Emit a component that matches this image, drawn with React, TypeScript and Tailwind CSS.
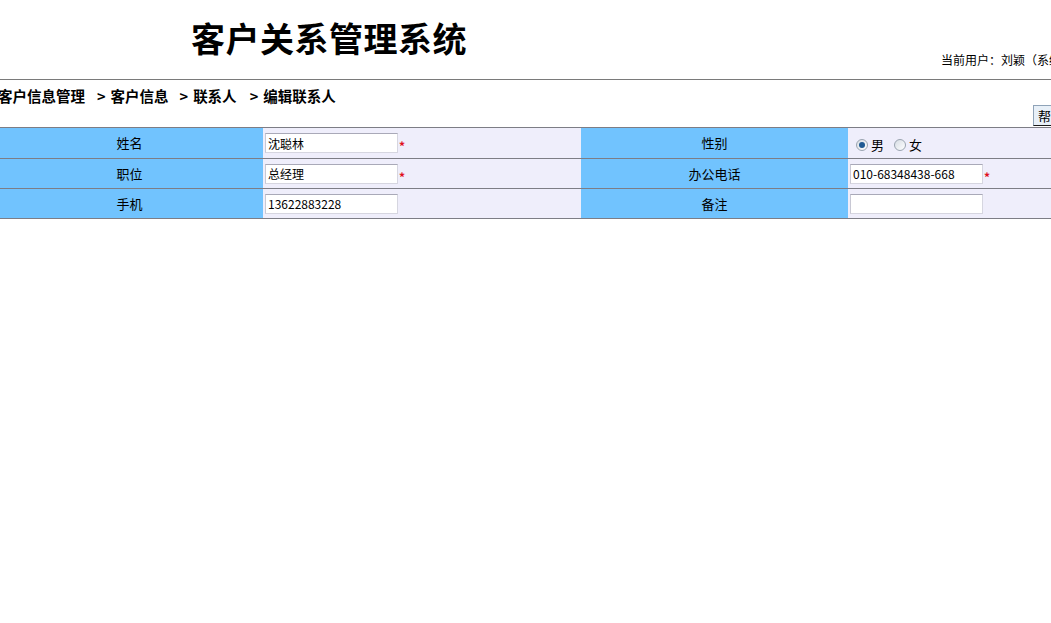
import type { ReactNode } from 'react';

const font = { fontFamily: '"Noto Sans CJK SC", "Liberation Sans", sans-serif' };

function Label({ children }: { children: ReactNode }) {
  return (
    <div className="flex w-[267px] shrink-0 items-center justify-center bg-[#71c3fe] text-[13px] text-black">
      {children}
    </div>
  );
}

function Field({ value, required }: { value: string; required?: boolean }) {
  return (
    <div className="flex w-[318px] shrink-0 items-center bg-[#efeefb] pl-[2px]">
      <input
        readOnly
        value={value}
        className="h-[20px] w-[133px] border border-[#d6d6e0] border-t-[#a9a9b8] border-l-[#c8c8d4] bg-white px-[2px] text-[12px] leading-[18px] text-black outline-none"
      />
      {required && <span className="ml-[1px] mt-[6px] text-[12px] font-bold leading-none text-[#e0101e]">*</span>}
    </div>
  );
}

function Radio({ checked, label }: { checked?: boolean; label: string }) {
  return (
    <span className="flex items-center">
      <span className="flex h-[12px] w-[12px] items-center justify-center rounded-full border border-[#9aa4b0] bg-gradient-to-br from-[#d7dde4] to-white">
        {checked && <span className="h-[6px] w-[6px] rounded-full bg-[#1f5a93]" />}
      </span>
      <span className="ml-[3px] text-[13px] leading-none">{label}</span>
    </span>
  );
}

export default function App() {
  return (
    <div className="h-[623px] w-[1051px] overflow-hidden bg-white text-black" style={font}>
      <div className="w-[1180px]">
        {/* 顶部标题 */}
        <header className="flex h-[80px] border-b border-[#7a7a7a]">
          <div className="w-[941px] shrink-0 pl-[191px] pt-[13px]">
            <h1 className="text-[34px] font-bold leading-[50px] tracking-[0.5px]">客户关系管理系统</h1>
          </div>
          <div className="self-end pb-[12px] text-[12px] leading-[14px]">当前用户：刘颖（系统管理员）</div>
        </header>

        {/* 面包屑 */}
        <div className="ml-[-2px] flex h-[25px] items-start pt-[7px] text-[14.5px] font-bold leading-[18px]">
          <span>客户信息管理</span>
          <span className="ml-[12px]">&gt;</span>
          <span className="ml-[5px]">客户信息</span>
          <span className="ml-[11px]">&gt;</span>
          <span className="ml-[5px]">联系人</span>
          <span className="ml-[13px]">&gt;</span>
          <span className="ml-[5px]">编辑联系人</span>
        </div>

        {/* 操作按钮 */}
        <div className="flex h-[22px] pl-[1033px]">
          <button className="h-[21px] w-[44px] border border-[#1a1a1a] border-t-[#8fa3b8] border-l-[#8fa3b8] bg-[#e8f0f8] px-[4px] text-left text-[13px] leading-none">
            帮助
          </button>
        </div>

        {/* 表单表格 */}
        <div className="ml-[-4px] border-t border-[#7d7d85]">
          <div className="flex h-[31px] border-b border-[#7d7d85]">
            <Label>姓名</Label>
            <Field value="沈聪林" required />
            <Label>性别</Label>
            <div className="flex w-[318px] shrink-0 items-center gap-[10px] bg-[#efeefb] pl-[8px] pt-[3px]">
              <Radio checked label="男" />
              <Radio label="女" />
            </div>
          </div>
          <div className="flex h-[30px] border-b border-[#7d7d85]">
            <Label>职位</Label>
            <Field value="总经理" required />
            <Label>办公电话</Label>
            <Field value="010-68348438-668" required />
          </div>
          <div className="flex h-[30px] border-b border-[#7d7d85]">
            <Label>手机</Label>
            <Field value="13622883228" />
            <Label>备注</Label>
            <Field value="" />
          </div>
        </div>
      </div>
    </div>
  );
}
